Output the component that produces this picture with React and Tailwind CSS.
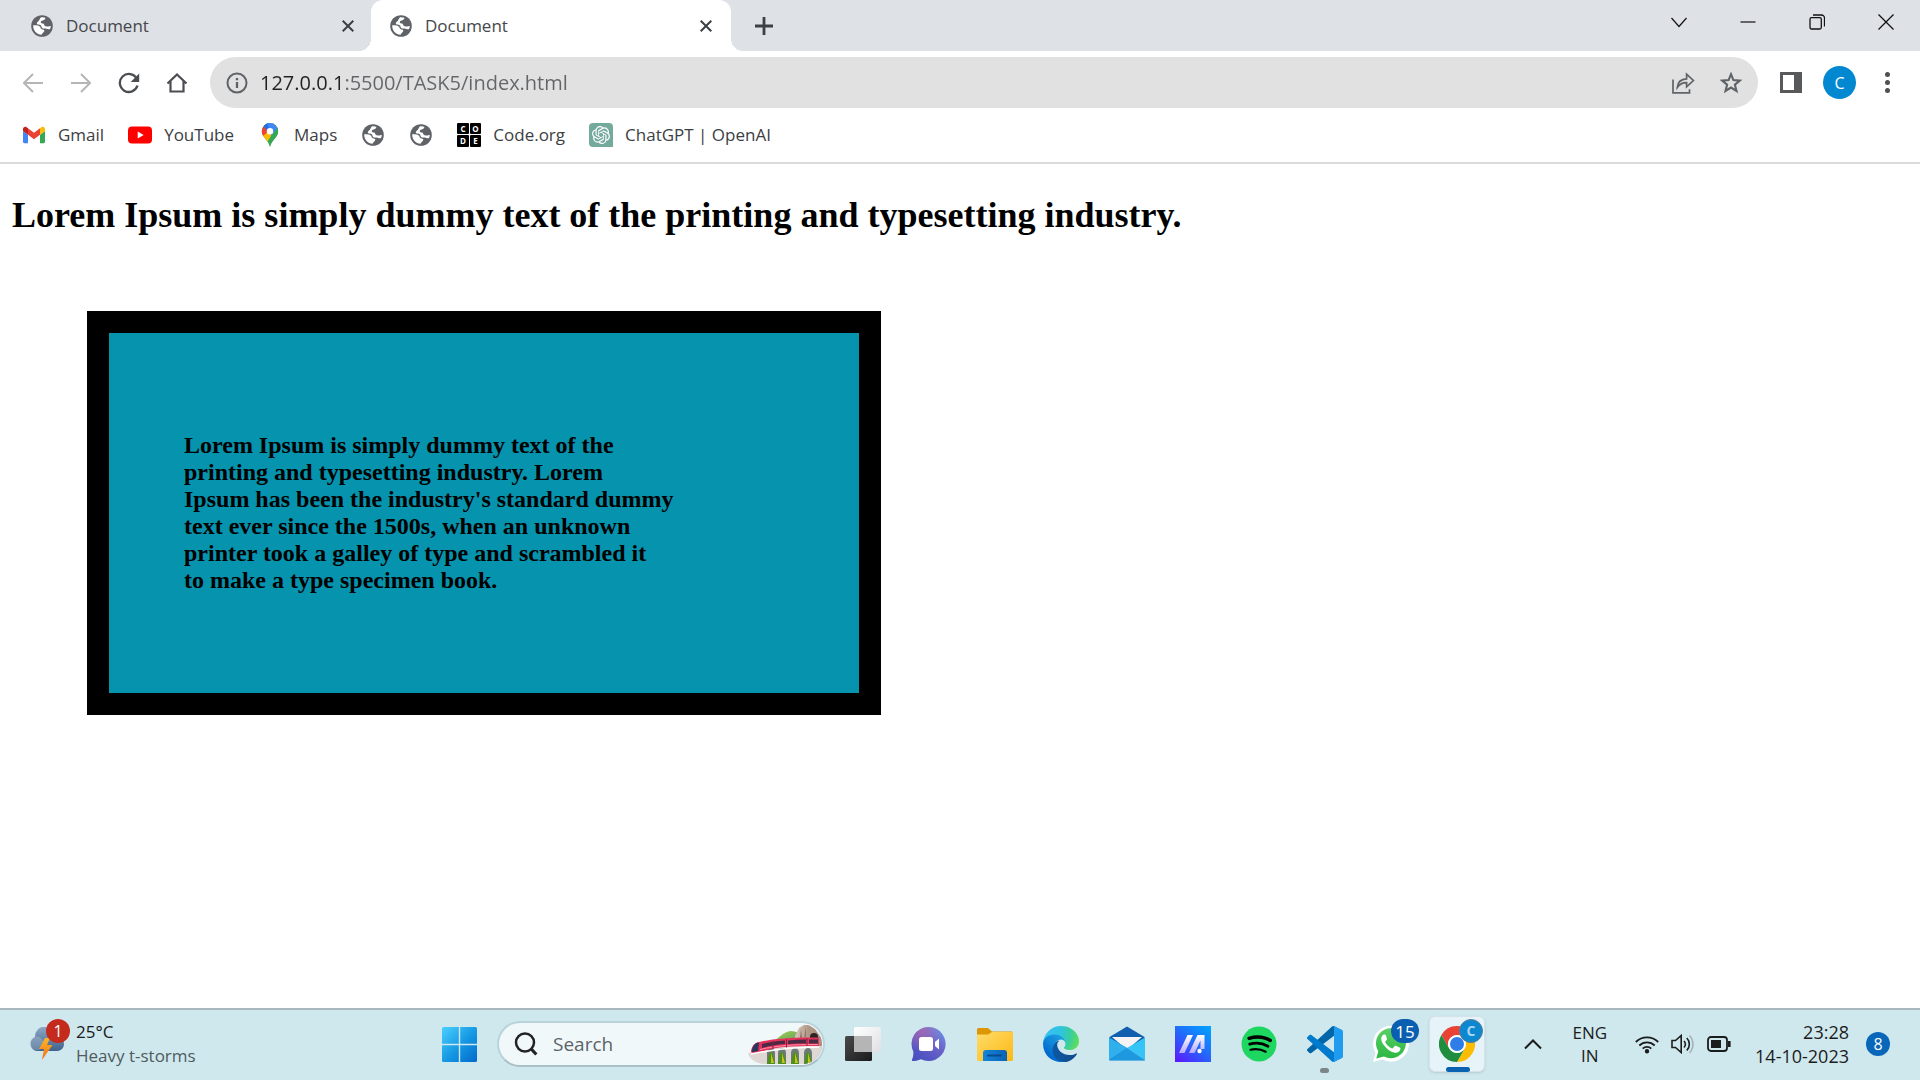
import React from "react";

const UI = "font-['Open_Sans','Noto_Sans',sans-serif]";

/* ---------- browser icons ---------- */

function Globe() {
  return (
    <svg viewBox="0 0 24 24" className="size-6 shrink-0" aria-hidden="true">
      <circle cx="12" cy="12" r="10.800" fill="#5f6368" />
      <path fill="#fff" d="M11 3.300c1.500-.2 3-.1 4.400.5-.1 1.500-1 2.300-2.600 2.700-1.500.4-2.200 1-2 1.900.2.800 1.300.9 2.300 1.100 1 .3 1 1.500 1.700 2.300.8.900 2.300.8 3.300.6 1.100-.2 2-.5 2.700-.3-.1 1-.3 2-.7 2.900-1.200.6-2.700.2-3.700-.2-1.300-.5-2.900.2-4-.6-1.100-.9-.7-2.300-1.700-3-1.300-.8-3 .1-3.700-1.200-.6-1.200.5-2 1.400-2.800C9.300 6.400 9.800 4.700 11 3.300z" />
      <path fill="#fff" d="M3.200 11.300c2.300 0 4.800-.2 6.500 1.100.9.700.8 1.900 1.700 2.500 1 .7 2.700.4 2.900 1.600.2 1.100-.9 1.700-1.600 2.400-.7.700-.8 1.300-1.200 1.900C6.700 20.600 3 16.500 3.200 11.300z" />
    </svg>
  );
}

const stroke = { fill: "none", stroke: "currentColor" };

function CloseIcon() {
  return (
    <svg viewBox="0 0 12 12" className="size-3" strokeWidth="2" {...stroke}>
      <path d="M.7.7l10.600 10.600M11.300.7L.7 11.300" />
    </svg>
  );
}

function PlusIcon() {
  return (
    <svg viewBox="0 0 18 18" className="size-[18px]" strokeWidth="2.800" {...stroke}>
      <path d="M9 0v18M0 9h18" />
    </svg>
  );
}

function Arrow({ flip }) {
  return (
    <svg viewBox="0 0 20 20" className="size-5" strokeWidth="2" {...stroke}>
      {flip ? <path d="M0 10h18.500M10 1l9 9-9 9" /> : <path d="M20 10H1.500M10 1l-9 9 9 9" />}
    </svg>
  );
}

function Reload() {
  return (
    <svg viewBox="0 0 22 22" className="size-[22px]" aria-hidden="true">
      <path d="M18.700 6.500A9 9 0 1 0 19.500 13.500" fill="none" stroke="#4a4d51" strokeWidth="2.300" />
      <path d="M21.200 1.500V10h-8.500z" fill="#4a4d51" />
    </svg>
  );
}

function Home() {
  return (
    <svg viewBox="0 0 22 22" className="size-[22px]" strokeWidth="2.200" {...stroke}>
      <path d="M1.500 11.500L11 2.500l9.500 9M4.500 9v10.500h13V9" />
    </svg>
  );
}

function Info() {
  return (
    <svg viewBox="0 0 22 22" className="size-[22px] shrink-0 text-[#5f6368]" strokeWidth="2" {...stroke}>
      <circle cx="11" cy="11" r="9.500" />
      <path d="M11 10v6M11 6v2.200" strokeWidth="2.300" />
    </svg>
  );
}

function Share() {
  return (
    <svg viewBox="0 0 24 24" className="size-6" strokeWidth="1.700" {...stroke}>
      <path d="M2 8.500v13.300h16.500v-3.500" />
      <path d="M6.300 16.500c.3-5 3.700-8.300 9.300-8.600V3.200l6.800 6.300-6.800 6.300v-4.200c-4-.2-7 1.500-9.300 4.900z" />
    </svg>
  );
}

function Star() {
  return (
    <svg viewBox="0 0 24 24" className="size-6" strokeWidth="2.100" {...stroke}>
      <path d="M12 3.200l2.400 5.900 6.400.5-4.900 4.100 1.600 6.200-5.500-3.400-5.500 3.400 1.600-6.200-4.900-4.100 6.400-.5z" />
    </svg>
  );
}

function Gmail() {
  return (
    <svg viewBox="52 42 88 66" className="h-6 w-6 shrink-0 p-px" aria-hidden="true">
      <path fill="#4285f4" d="M58 108h14V74L52 59v43c0 3.320 2.690 6 6 6" />
      <path fill="#34a853" d="M120 108h14c3.320 0 6-2.690 6-6V59l-20 15" />
      <path fill="#fbbc04" d="M120 48v26l20-15v-8c0-7.420-8.470-11.650-14.400-7.200" />
      <path fill="#ea4335" d="M72 74V48l24 18 24-18v26L96 92" />
      <path fill="#c5221f" d="M52 51v8l20 15V48l-5.600-4.200c-5.940-4.450-14.400-.22-14.400 7.200" />
    </svg>
  );
}

function YouTube() {
  return (
    <svg viewBox="0 0 24 24" className="size-6 shrink-0" aria-hidden="true">
      <rect y="3.500" width="24" height="17" rx="4" fill="#f00" />
      <path d="M9.700 8.500v7l6-3.500z" fill="#fff" />
    </svg>
  );
}

function Maps() {
  return (
    <svg viewBox="0 0 24 24" className="size-6 shrink-0" aria-hidden="true">
      <defs>
        <clipPath id="pin">
          <path d="M12 0a8.200 8.200 0 0 0-8.200 8.200c0 6.300 6.700 8.300 8.200 15.800 1.500-7.500 8.200-9.500 8.200-15.800A8.200 8.200 0 0 0 12 0z" />
        </clipPath>
      </defs>
      <g clipPath="url(#pin)">
        <path fill="#34a853" d="M0 0h24v24H0z" />
        <path fill="#fbbc04" d="M0 9l8-3 8 6-9 9-7-4z" />
        <path fill="#ea4335" d="M0 0h7l5 8-7 6H0z" transform="translate(0 -1)" />
        <path fill="#1a73e8" d="M5 0h6l2 8-3 0-5-5z" />
        <path fill="#4285f4" d="M9 0h13v6l-9 7-1-5-3-8z" />
        <path fill="#34a853" d="M20 4v8l-8 12-2-6 3-5z" />
      </g>
      <circle cx="12" cy="8.200" r="3.200" fill="#fff" />
    </svg>
  );
}

function CodeOrg() {
  return (
    <span className="grid size-6 shrink-0 grid-cols-2 gap-px text-[8px] leading-[11px] font-bold text-white" aria-hidden="true">
      {["C", "O", "D", "E"].map((c) => (
        <span key={c} className="flex items-center justify-center rounded-[1px] bg-black">{c}</span>
      ))}
    </span>
  );
}

function OpenAI() {
  return (
    <svg viewBox="0 0 24 24" className="size-6 shrink-0" aria-hidden="true">
      <path d="M4 0h16a4 4 0 0 1 4 4v20H4a4 4 0 0 1-4-4V4a4 4 0 0 1 4-4z" fill="#74aa9c" />
      <g transform="translate(3 3) scale(.75)">
        <path fill="#fff" d="M22.282 9.821a5.985 5.985 0 0 0-.516-4.910 6.046 6.046 0 0 0-6.510-2.900A6.065 6.065 0 0 0 4.981 4.182a5.985 5.985 0 0 0-3.998 2.900 6.046 6.046 0 0 0 .743 7.097 5.980 5.980 0 0 0 .510 4.911 6.051 6.051 0 0 0 6.515 2.900A5.985 5.985 0 0 0 13.260 24a6.056 6.056 0 0 0 5.772-4.206 5.990 5.990 0 0 0 3.998-2.900 6.056 6.056 0 0 0-.748-7.073zM13.260 22.430a4.476 4.476 0 0 1-2.876-1.040l.142-.081 4.778-2.758a.795.795 0 0 0 .393-.681v-6.737l2.020 1.169a.071.071 0 0 1 .038.052v5.583a4.504 4.504 0 0 1-4.495 4.493zM3.600 18.304a4.470 4.470 0 0 1-.535-3.014l.142.085 4.783 2.759a.771.771 0 0 0 .780 0l5.843-3.369v2.332a.080.080 0 0 1-.033.062L9.740 19.950a4.500 4.500 0 0 1-6.140-1.646zM2.341 7.896a4.485 4.485 0 0 1 2.366-1.973V11.600a.766.766 0 0 0 .388.677l5.814 3.354-2.020 1.169a.076.076 0 0 1-.071 0l-4.830-2.787A4.504 4.504 0 0 1 2.341 7.872zm16.597 3.855l-5.833-3.387L15.119 7.200a.076.076 0 0 1 .071 0l4.830 2.791a4.494 4.494 0 0 1-.677 8.105v-5.678a.790.790 0 0 0-.405-.667zm2.010-3.023l-.142-.085-4.774-2.782a.776.776 0 0 0-.785 0L9.409 9.230V6.897a.066.066 0 0 1 .028-.062l4.830-2.787a4.500 4.500 0 0 1 6.680 4.660zM8.307 12.863l-2.020-1.164a.080.080 0 0 1-.038-.057V6.075a4.500 4.500 0 0 1 7.376-3.454l-.142.081-4.778 2.758a.795.795 0 0 0-.393.682zm1.097-2.366l2.602-1.500 2.607 1.500v2.999l-2.597 1.500-2.607-1.500z" />
      </g>
    </svg>
  );
}

/* ---------- browser chrome ---------- */

function Tab({ active }) {
  return (
    <div
      className={
        active
          ? "relative flex h-[51px] w-[360px] items-center rounded-t-xl bg-white pr-[15px] pl-[18px]"
          : "flex h-[51px] w-[371px] items-center pr-[13px] pl-[30px]"
      }
    >
      {active && (
        <>
          <span className="absolute -left-3 bottom-0 size-3 bg-[radial-gradient(circle_at_0_0,#dee1e6_12px,#fff_12px)]" />
          <span className="absolute -right-3 bottom-0 size-3 bg-[radial-gradient(circle_at_100%_0,#dee1e6_12px,#fff_12px)]" />
        </>
      )}
      <button className="flex flex-1 items-center gap-3 text-left text-[17px] leading-6 text-[#45474a]">
        <Globe />
        Document
      </button>
      <button aria-label="Close tab" className="p-1 text-[#3c4043]">
        <CloseIcon />
      </button>
    </div>
  );
}

function TabStrip() {
  return (
    <div className="flex h-[51px] items-center bg-[#dee1e6]">
      <Tab />
      <Tab active />
      <button aria-label="New tab" className="ml-6 text-[#3c4043]">
        <PlusIcon />
      </button>
      <div className="ml-auto flex h-[43px] items-center self-start text-[#111]">
        <button aria-label="Search tabs" className="flex w-[68px] justify-center">
          <svg viewBox="0 0 16 16" className="size-4" strokeWidth="1.200" {...stroke}><path d="M.5 4l7.500 8.500L15.500 4" /></svg>
        </button>
        <button aria-label="Minimize" className="flex w-[69px] justify-center">
          <svg viewBox="0 0 16 16" className="size-4" strokeWidth="1.200" {...stroke}><path d="M.5 8h15" /></svg>
        </button>
        <button aria-label="Restore" className="flex w-[69px] justify-center">
          <svg viewBox="0 0 16 16" className="size-4" strokeWidth="1.300" {...stroke}>
            <rect x="1" y="3.700" width="11.300" height="11.300" rx="1.500" />
            <path d="M4 1h8.500a3 3 0 0 1 3 3v8.500" />
          </svg>
        </button>
        <button aria-label="Close" className="flex w-[69px] justify-center">
          <svg viewBox="0 0 16 16" className="size-4" strokeWidth="1.300" {...stroke}><path d="M.5.5l15 15M15.500.5l-15 15" /></svg>
        </button>
      </div>
    </div>
  );
}

function Toolbar() {
  return (
    <div className="flex h-[63px] items-center pr-[21px] pl-[9px] text-[#4a4d51]">
      <button aria-label="Back" className="flex w-12 justify-center text-[#b4b6b8]"><Arrow /></button>
      <button aria-label="Forward" className="flex w-12 justify-center text-[#b4b6b8]"><Arrow flip /></button>
      <button aria-label="Reload" className="flex w-12 justify-center"><Reload /></button>
      <button aria-label="Home" className="flex w-12 justify-center"><Home /></button>
      <div className="ml-[9px] flex h-[51px] flex-1 items-center rounded-full bg-[#e1e1e1] pr-[15px] pl-4 text-[#5f6368]">
        <Info />
        <input
          aria-label="Address"
          defaultValue="127.0.0.1:5500/TASK5/index.html"
          className="ml-3 min-w-0 flex-1 bg-[linear-gradient(90deg,#202124_86px,#636569_86px)] bg-clip-text text-xl leading-8 text-transparent outline-none"
        />
        <button aria-label="Share" className="mr-6"><Share /></button>
        <button aria-label="Bookmark"><Star /></button>
      </div>
      <button aria-label="Side panel" className="ml-[22px]">
        <svg viewBox="0 0 22 21" className="h-[21px] w-[22px]" aria-hidden="true">
          <path fillRule="evenodd" fill="#58595b" d="M0 0h22v21H0zM3 3v15h11V3z" />
        </svg>
      </button>
      <button className="ml-[21px] size-[33px] rounded-full bg-[#0288d1] text-base leading-none text-white">C</button>
      <button aria-label="Menu" className="ml-[19px] flex w-[24px] flex-col items-center gap-[3px]">
        <span className="size-[5px] rounded-full bg-[#4f5052]" />
        <span className="size-[5px] rounded-full bg-[#4f5052]" />
        <span className="size-[5px] rounded-full bg-[#4f5052]" />
      </button>
    </div>
  );
}

function Bookmarks() {
  const items = [
    [<Gmail key="i" />, "Gmail"],
    [<YouTube key="i" />, "YouTube"],
    [<Maps key="i" />, "Maps"],
    [<Globe key="i" />, ""],
    [<Globe key="i" />, ""],
    [<CodeOrg key="i" />, "Code.org"],
    [<OpenAI key="i" />, "ChatGPT | OpenAI"],
  ];
  return (
    <nav className="flex h-[50px] items-center gap-6 border-b-2 border-[#dadbdc] pb-[7px] pl-[22px]">
      {items.map(([icon, label], i) => (
        <a key={i} href="#" aria-label={label || "Saved page"} className="flex items-center gap-3 text-[17px] leading-6 text-[#3c4043]">
          {icon}
          {label && <span>{label}</span>}
        </a>
      ))}
    </nav>
  );
}

/* ---------- taskbar icons ---------- */

function Weather() {
  return (
    <svg viewBox="0 0 36 34" className="h-[34px] w-9" aria-hidden="true">
      <defs>
        <linearGradient id="cl" x1="0" y1="0" x2="0" y2="1">
          <stop offset="0" stopColor="#8fa9c6" />
          <stop offset="1" stopColor="#3f628c" />
        </linearGradient>
        <linearGradient id="bolt" x1="0" y1="0" x2="0" y2="1">
          <stop offset="0" stopColor="#fdb62b" />
          <stop offset="1" stopColor="#f0700c" />
        </linearGradient>
      </defs>
      <path fill="url(#cl)" d="M7 10a10 10 0 0 1 20-1 8 8 0 0 1 9 8c0 4-3 7-7 7H8a7.500 7.500 0 0 1-1-14z" />
      <circle cx="8.500" cy="16.500" r="7" fill="#b7c8da" opacity=".35" />
      <path fill="url(#bolt)" d="M17 11l-6 11h5l-2 11L24.500 18h-5.500l3-7z" />
    </svg>
  );
}

function Windows() {
  return (
    <svg viewBox="0 0 35 35" className="size-[35px]" aria-hidden="true">
      <defs>
        <linearGradient id="win" x1="0" y1="0" x2="1" y2="1">
          <stop offset="0" stopColor="#4cd0ff" />
          <stop offset=".5" stopColor="#189be4" />
          <stop offset="1" stopColor="#0069cc" />
        </linearGradient>
      </defs>
      <path fill="url(#win)" d="M1.500 0H16.800V16.800H0V1.500A1.500 1.500 0 0 1 1.500 0zM18.200 0H33.500A1.500 1.500 0 0 1 35 1.500V16.800H18.200zM0 18.200H16.800V35H1.500A1.500 1.500 0 0 1 0 33.500zM18.200 18.200H35V33.500A1.500 1.500 0 0 1 33.500 35H18.200z" />
    </svg>
  );
}

function Train() {
  return (
    <svg viewBox="0 0 74 40" className="h-10 w-[74px] shrink-0" aria-hidden="true">
      <defs>
        <clipPath id="pillEnd"><path d="M0 0h54a20 20 0 0 1 0 40H14C6 40 0 36 0 30z" /></clipPath>
        <linearGradient id="rock" x1="0" y1="0" x2="1" y2="0">
          <stop offset="0" stopColor="#d8c8ba" />
          <stop offset=".5" stopColor="#b09887" />
          <stop offset="1" stopColor="#a88d7d" />
        </linearGradient>
        <linearGradient id="hill" x1="0" y1="0" x2="1" y2="1">
          <stop offset="0" stopColor="#a9cf4a" />
          <stop offset="1" stopColor="#4f9a6c" />
        </linearGradient>
      </defs>
      <g clipPath="url(#pillEnd)">
        <path fill="url(#hill)" d="M26 17c5-3 9-9 17-10 5 0 9 3 12 6v6H26z" />
        <path fill="url(#rock)" d="M47 12l4-8 5-3 5 0 6 4 7 10v25H49z" />
        <path fill="#8c7364" d="M53 5l1 9h-2zM58 3v9l-2 3z" />
        <path fill="#2d2523" d="M62 17v-4a4 4 0 0 1 8 0v6z" />
        <path fill="#ded7d4" d="M0 29c8-1 20-5 36-6.500 14-1 26-.5 38-.5v18H14C6 38 1 34 0 29z" />
        {[23, 34, 47, 60].map((x) => (
          <g key={x}>
            <path fill="#6d7b78" d={`M${x - 4} 40V29a4 5 0 0 1 8 0v11z`} />
            <path fill="#4f8f1d" d={`M${x} 27l2.500 5 1.500 8h-8l1.500-8z`} />
            <path fill="#c6c21f" d={`M${x} 29l3 10h-3z`} />
          </g>
        ))}
        <path fill="#e5325b" d="M3 27c1-5 3-8 8-9 16-4 38-5 60-4.500v8.500c-20 0-34 0-48 3-8 2-13 4-18 4-2 0-2-1-2-2z" />
        <path fill="#4a2a45" d="M14 20c7-2 14-3 23-3.500v3.500c-8 .5-16 2-23 4zM40 16.500c6-.5 12-1 18-1v4c-6 0-12 0-18 .8zM61 15.500h9v4h-9z" />
        <path fill="#27385e" d="M4 26c1-4 3-7 6-7.500l1 .5-1 8-5 1c-1 0-1-1-1-2z" />
        <path stroke="#ff8ea6" fill="none" d="M12 25.500c17-4 33-5 58-5" />
        <path stroke="#8b1c3c" fill="none" d="M25 17v8M38.500 15.500v8M59 14v8" />
        <path stroke="#fff" strokeWidth="1.500" fill="none" d="M3 30c20-4 36-6.500 68-7" />
      </g>
    </svg>
  );
}

function TaskView() {
  return (
    <svg viewBox="0 0 36 36" className="size-9" aria-hidden="true">
      <defs>
        <linearGradient id="tv1" x1="0" y1="0" x2="1" y2="1"><stop offset="0" stopColor="#4a4a4a" /><stop offset="1" stopColor="#1b1b1b" /></linearGradient>
        <linearGradient id="tv2" x1="0" y1="0" x2="1" y2="1"><stop offset="0" stopColor="#fff" /><stop offset="1" stopColor="#dfdfe3" /></linearGradient>
      </defs>
      <rect x="0" y="10" width="27" height="25" rx="1.500" fill="url(#tv1)" />
      <rect x="9" y="1" width="27" height="25" rx="1.500" fill="url(#tv2)" />
      <rect x="9" y="10" width="18" height="16" fill="#b5b5b5" />
    </svg>
  );
}

function Meet() {
  return (
    <svg viewBox="0 0 36 36" className="size-9" aria-hidden="true">
      <defs>
        <linearGradient id="mt" x1="1" y1="0" x2=".3" y2="1">
          <stop offset="0" stopColor="#6a9bf0" /><stop offset=".5" stopColor="#6a64c8" /><stop offset="1" stopColor="#4b4fc0" />
        </linearGradient>
        <radialGradient id="mt2" cx=".3" cy=".1" r=".6"><stop offset="0" stopColor="#b565a7" stopOpacity=".7" /><stop offset="1" stopColor="#b565a7" stopOpacity="0" /></radialGradient>
      </defs>
      <path fill="url(#mt)" d="M18 1a17 17 0 1 1-8 32.200c-3 1.300-6 1.800-8.500 1.800C.8 35 .8 34 1 33.500 2.300 31 2.500 28 2.300 25.500A17 17 0 0 1 18 1z" />
      <path fill="url(#mt2)" d="M18 1a17 17 0 1 1-8 32.200c-3 1.300-6 1.800-8.500 1.800C.8 35 .8 34 1 33.500 2.300 31 2.500 28 2.300 25.500A17 17 0 0 1 18 1z" />
      <rect x="8" y="11" width="14" height="14" rx="2.500" fill="#fff" />
      <path fill="#fff" d="M24 16l4-3.500v11L24 20z" />
    </svg>
  );
}

function Folder() {
  return (
    <svg viewBox="0 0 36 36" className="size-9" aria-hidden="true">
      <defs>
        <linearGradient id="fo" x1="0" y1="0" x2="1" y2="1"><stop offset="0" stopColor="#ffdc6b" /><stop offset="1" stopColor="#fdb813" /></linearGradient>
        <linearGradient id="fo2" x1="0" y1="0" x2="1" y2="0"><stop offset="0" stopColor="#1485d9" /><stop offset="1" stopColor="#0b62b4" /></linearGradient>
      </defs>
      <path fill="#dd9703" d="M1.500 2H11l4 3.500H34.500A1.500 1.500 0 0 1 36 7v5H0V3.500A1.500 1.500 0 0 1 1.500 2z" />
      <path fill="url(#fo)" d="M0 8.500h11l4-2.500h21v27.500A1.500 1.500 0 0 1 34.500 35h-33A1.500 1.500 0 0 1 0 33.500z" />
      <path fill="url(#fo2)" d="M6 35V27a3 3 0 0 1 3-3h18a3 3 0 0 1 3 3v8z" />
      <rect x="10" y="28.500" width="15" height="2" rx="1" fill="#084c8f" />
    </svg>
  );
}

function Edge() {
  return (
    <svg viewBox="0 0 256 256" className="size-9" aria-hidden="true">
      <defs>
        <linearGradient id="e1" x1="63.330" y1="177.050" x2="241.670" y2="177.050" gradientUnits="userSpaceOnUse"><stop offset="0" stopColor="#0c59a4" /><stop offset="1" stopColor="#114a8b" /></linearGradient>
        <linearGradient id="e2" x1="157.350" y1="95" x2="45.960" y2="220" gradientUnits="userSpaceOnUse"><stop offset="0" stopColor="#1b9de2" /><stop offset=".5" stopColor="#0f86d8" /><stop offset="1" stopColor="#0067cc" /></linearGradient>
        <radialGradient id="e3" cx="25" cy="45" r="250" gradientUnits="userSpaceOnUse"><stop offset="0" stopColor="#35c1f1" /><stop offset=".4" stopColor="#2fc3e2" /><stop offset=".7" stopColor="#37cf9c" /><stop offset="1" stopColor="#6be04c" /></radialGradient>
      </defs>
      <path fill="url(#e1)" d="M235.680 195.460a93.730 93.730 0 0 1-10.540 4.710 101.870 101.870 0 0 1-35.900 6.460c-47.320 0-88.540-32.550-88.540-74.320a31.480 31.480 0 0 1 16.430-27.310c-42.800 1.800-53.800 46.400-53.800 72.530 0 73.880 68.090 81.370 82.760 81.370 7.910 0 19.840-2.300 27-4.560l1.310-.44a128.340 128.340 0 0 0 66.600-52.800 4 4 0 0 0-5.320-5.640z" />
      <path fill="url(#e2)" d="M105.730 241.420a79.200 79.200 0 0 1-22.740-21.340 80.720 80.720 0 0 1 29.530-120c3.120-1.470 8.450-4.130 15.540-4a32.350 32.350 0 0 1 25.690 13 31.880 31.880 0 0 1 6.360 18.660c0-.21 24.460-79.600-80-79.600-43.900 0-80 41.660-80 78.210a130.150 130.150 0 0 0 12.110 56 128 128 0 0 0 156.380 67.110 75.550 75.550 0 0 1-62.780-8z" />
      <path fill="url(#e3)" d="M152.330 148.860c-.81 1.050-3.300 2.500-3.300 5.660 0 2.610 1.700 5.120 4.720 7.230 14.380 10 41.490 8.680 41.560 8.680a59.560 59.560 0 0 0 30.270-8.350 61.380 61.380 0 0 0 30.430-52.880c.26-22.410-8-37.310-11.340-43.910C223.460 23.840 177.720 0 128 0A128 128 0 0 0 0 126.200c.48-36.540 36.800-66.050 80-66.050 3.500 0 23.460.34 42 10.070 16.340 8.580 24.900 18.940 30.850 29.210 6.180 10.670 7.280 24.150 7.280 29.520s-2.740 13.330-7.800 19.910z" />
    </svg>
  );
}

function Mail() {
  return (
    <svg viewBox="0 0 36 36" className="size-9" aria-hidden="true">
      <path fill="#0f5fae" d="M18 .5L35.500 11v8H.5v-8z" />
      <path fill="#f4f4f6" d="M3 11h30L19 23h-2z" />
      <path fill="#1489d8" d="M0 11.500L18 22 36 34v.5H1A1 1 0 0 1 0 33.500z" />
      <path fill="#2fb0ec" d="M0 11.500L18 22 0 34z" />
      <path fill="#35c4f5" d="M36 11.500L18 22l18 12z" />
      <path fill="#22a0e4" d="M18 22l18 12.300H1z" opacity=".7" />
    </svg>
  );
}

function MyAsus() {
  return (
    <svg viewBox="0 0 36 36" className="size-9" aria-hidden="true">
      <defs>
        <linearGradient id="as" x1=".1" y1="1" x2=".9" y2="0"><stop offset="0" stopColor="#5a1bff" /><stop offset=".5" stopColor="#2467fb" /><stop offset="1" stopColor="#02a2ff" /></linearGradient>
        <linearGradient id="as2" x1="0" y1="1" x2="0" y2="0"><stop offset="0" stopColor="#b7a8ff" /><stop offset="1" stopColor="#fff" /></linearGradient>
      </defs>
      <path fill="url(#as)" d="M0 0h36v36H0z" />
      <path fill="url(#as2)" d="M4 27L12.500 9H18L9.500 27zM14 27L22.500 9h7v14h-4v-8.500L19.500 27z" />
      <circle cx="24.500" cy="25" r="2.200" fill="#fff" />
    </svg>
  );
}

function Spotify() {
  return (
    <svg viewBox="0 0 36 36" className="size-9" aria-hidden="true">
      <circle cx="18" cy="18" r="17.500" fill="#1ed760" />
      <g fill="none" stroke="#000" strokeLinecap="round">
        <path strokeWidth="3.300" d="M8 12.300c7-2 15.500-1.300 21.300 2.200" />
        <path strokeWidth="2.800" d="M8.700 18.200c6-1.700 13-1 18.300 2" />
        <path strokeWidth="2.200" d="M9.500 23.700c5.500-1.200 10.500-.6 15.200 2" />
      </g>
    </svg>
  );
}

function VSCode() {
  return (
    <svg viewBox="0 0 100 100" className="size-9" aria-hidden="true">
      <path fill="#0065a9" d="M96.460 10.800L75.860.88C73.470-.27 70.620.22 68.750 2.080L1.300 63.580c-1.810 1.650-1.810 4.510.01 6.160l5.510 5.010c1.480 1.350 3.720 1.450 5.320.23L93.360 13.370C96.090 11.300 100 13.240 100 16.660v-.24c0-2.400-1.380-4.580-3.540-5.620z" />
      <path fill="#007acc" d="M96.460 89.200l-20.600 9.920c-2.390 1.150-5.240.66-7.110-1.200L1.300 36.420c-1.810-1.650-1.810-4.510.01-6.160l5.510-5.010c1.480-1.350 3.720-1.450 5.320-.23l81.220 61.610c2.730 2.070 6.640.13 6.640-3.290v.24c0 2.400-1.380 4.580-3.540 5.620z" />
      <path fill="#1f9cf0" d="M75.860 99.130c-2.390 1.150-5.240.66-7.110-1.210 2.310 2.310 6.250.67 6.250-2.590V4.670c0-3.260-3.940-4.890-6.250-2.590 1.870-1.870 4.720-2.350 7.110-1.210l20.600 9.910c2.160 1.040 3.540 3.230 3.540 5.630v67.180c0 2.400-1.380 4.590-3.540 5.630z" />
    </svg>
  );
}

function WhatsApp() {
  return (
    <svg viewBox="0 0 36 36" className="size-9" aria-hidden="true">
      <defs>
        <linearGradient id="wa" x1="0" y1="0" x2="0" y2="1"><stop offset="0" stopColor="#5bd066" /><stop offset="1" stopColor="#2cb742" /></linearGradient>
      </defs>
      <path fill="#fff" d="M0 36l2.500-9.300A18 18 0 1 1 9.500 33.500z" />
      <path fill="url(#wa)" d="M3.300 32.500l2-7.200a15 15 0 1 1 5.700 5.200z" />
      <path fill="#fff" d="M13 9.500c-.5-1-1-1-1.600-1-1.500 0-3.200 1.800-3.200 4.400 0 2.500 1.800 5 3 6.500 3 4 7 6.800 10.800 7.400 2.500.4 5-1.300 5.300-3 .2-1 .2-1.700-.2-2l-4.200-2c-.6-.2-1-.1-1.400.4l-1.500 1.900c-.4.4-.8.5-1.300.2-2.800-1.200-5-3.200-6.400-5.700-.3-.5-.1-.9.3-1.300l1.200-1.500c.2-.4.300-.7.100-1.100z" />
    </svg>
  );
}

function Chrome() {
  return (
    <svg viewBox="0 0 36 36" className="size-9" aria-hidden="true">
      <path fill="#ea4335" d="M2.410 9A18 18 0 0 1 33.590 9H18a9 9 0 0 0-7.790 13.500z" />
      <path fill="#fbbc04" d="M33.590 9A18 18 0 0 1 18 36l7.790-13.500A9 9 0 0 0 18 9z" />
      <path fill="#1e8e3e" d="M18 36A18 18 0 0 1 2.410 9l7.800 13.500a9 9 0 0 0 15.580 0z" />
      <circle cx="18" cy="18" r="9" fill="#fff" />
      <circle cx="18" cy="18" r="7" fill="#2f7de9" />
    </svg>
  );
}

/* ---------- taskbar ---------- */

function TaskButton({ label, active, running, badge, children }) {
  return (
    <button
      aria-label={label}
      className={
        active
          ? "relative flex size-14 items-center justify-center rounded-md border border-[#d5e3e8] bg-[#e6f3f8] shadow-sm"
          : "relative flex size-14 items-center justify-center"
      }
    >
      {children}
      {badge}
      {active && <span className="absolute -bottom-px left-4 h-[5px] w-6 rounded-full bg-[#0a62b1]" />}
      {running && <span className="absolute -bottom-px left-[23px] h-[5px] w-[9px] rounded-full bg-[#7c8587]" />}
    </button>
  );
}

function Taskbar() {
  return (
    <footer className="grid h-[72px] grid-cols-[1fr_auto_1fr] items-center border-t-2 border-[#a9b8bc] bg-[#cfe8ee] pb-[2px]">
      <button className="relative flex items-center gap-3 pl-7 text-left text-[17px] leading-6">
        <Weather />
        <span className="absolute -top-px left-[46px] flex size-6 items-center justify-center rounded-full bg-[#c42b1c] text-base leading-none text-white">1</span>
        <span>
          <span className="block text-[#1a1a1a]">25°C</span>
          <span className="block text-[#4f5b5e]">Heavy t-storms</span>
        </span>
      </button>

      <div className="mr-1 flex items-center gap-[10px]">
        <TaskButton label="Start"><Windows /></TaskButton>
        <label className="flex h-[46px] w-[328px] items-center rounded-full border-2 border-b-[#a9c0c7] border-[#b9d3da] bg-[#f1f8fa] pr-px pl-[15px]">
          <svg viewBox="0 0 24 24" className="size-6 shrink-0 text-[#222]" strokeWidth="2.500" {...stroke}>
            <circle cx="11" cy="10.500" r="9" />
            <path d="M17.300 17l5 5.500" strokeWidth="3.200" />
          </svg>
          <input type="text" aria-label="Search" placeholder="Search" className="ml-[15px] min-w-0 flex-1 bg-transparent text-[19px] leading-7 outline-none placeholder:text-[#5c6366]" />
          <Train />
        </label>
        <TaskButton label="Task view"><TaskView /></TaskButton>
        <TaskButton label="Chat"><Meet /></TaskButton>
        <TaskButton label="File Explorer"><Folder /></TaskButton>
        <TaskButton label="Edge"><Edge /></TaskButton>
        <TaskButton label="Mail"><Mail /></TaskButton>
        <TaskButton label="MyASUS"><MyAsus /></TaskButton>
        <TaskButton label="Spotify"><Spotify /></TaskButton>
        <TaskButton label="Visual Studio Code" running><VSCode /></TaskButton>
        <TaskButton
          label="WhatsApp"
          badge={<span className="absolute top-[3px] left-7 flex h-6 w-7 items-center justify-center rounded-full bg-[#0a5fb0] text-[17px] leading-none text-white">15</span>}
        >
          <WhatsApp />
        </TaskButton>
        <TaskButton
          label="Chrome"
          active
          badge={<span className="absolute top-[2px] left-[29px] flex size-6 items-center justify-center rounded-full border border-[#5d7f93] bg-[#0d87cf] text-sm leading-none font-bold text-[#a5d6f2]">C</span>}
        >
          <Chrome />
        </TaskButton>
      </div>

      <div className="flex items-center justify-end pr-[30px] text-[17px] leading-6 text-[#1c1c1c]">
        <button aria-label="Hidden icons">
          <svg viewBox="0 0 18 12" className="h-3 w-[18px]" strokeWidth="2" {...stroke}><path d="M1 10.500l8-8 8 8" /></svg>
        </button>
        <button className="ml-[30px] text-center leading-[23px]">
          ENG<br />IN
        </button>
        <button aria-label="Network, volume and battery" className="ml-7 flex items-center gap-3">
          <svg viewBox="0 0 24 20" className="h-5 w-6" strokeWidth="1.800" {...stroke}>
            <path d="M.8 8a16 16 0 0 1 22.400 0M4.300 11.500a11 11 0 0 1 15.400 0M7.700 14.700a6.200 6.200 0 0 1 8.600 0" />
            <circle cx="12" cy="17.300" r="1.300" fill="currentColor" />
          </svg>
          <svg viewBox="0 0 24 20" className="h-5 w-6" strokeWidth="1.600" {...stroke}>
            <path d="M1 6.500h3.500L10.200 1.500v17L4.500 13.500H1zM13 7a4.500 4.500 0 0 1 0 6.500M15.800 4a9 9 0 0 1 0 12.500" />
            <path d="M18.500 1.500a13 13 0 0 1 0 17.500" stroke="#9fb4ba" />
          </svg>
          <svg viewBox="0 0 24 16" className="h-4 w-6" strokeWidth="1.800" {...stroke}>
            <rect x="1" y="1" width="19" height="14" rx="3" />
            <rect x="4" y="4" width="10" height="8" fill="currentColor" stroke="none" />
            <path d="M22.300 5v6" strokeWidth="2.600" />
          </svg>
        </button>
        <button className="ml-6 text-right text-[18px] leading-6">
          23:28<br />14-10-2023
        </button>
        <button aria-label="8 notifications" className="ml-[17px] flex size-6 items-center justify-center rounded-full bg-[#0a66b9] text-base leading-none text-white">8</button>
      </div>
    </footer>
  );
}

export default function App() {
  return (
    <div className={`flex min-h-screen flex-col bg-white ${UI}`}>
      <header>
        <TabStrip />
        <Toolbar />
        <Bookmarks />
      </header>
      <main className="flex-1 px-3 pt-[31px] font-['Liberation_Serif',serif] text-black">
        <h1 className="text-4xl leading-10 font-bold">
          Lorem Ipsum is simply dummy text of the printing and typesetting industry.
        </h1>
        <section className="mt-[76px] ml-[75px] w-[794px] border-[22px] border-black bg-[#0693ae] px-[75px] py-[99px]">
          <p className="text-2xl leading-[27px] font-bold">
            Lorem Ipsum is simply dummy text of the
            <br />
            printing and typesetting industry. Lorem
            <br />
            Ipsum has been the industry's standard dummy
            <br />
            text ever since the 1500s, when an unknown
            <br />
            printer took a galley of type and scrambled it
            <br />
            to make a type specimen book.
          </p>
        </section>
      </main>
      <Taskbar />
    </div>
  );
}
